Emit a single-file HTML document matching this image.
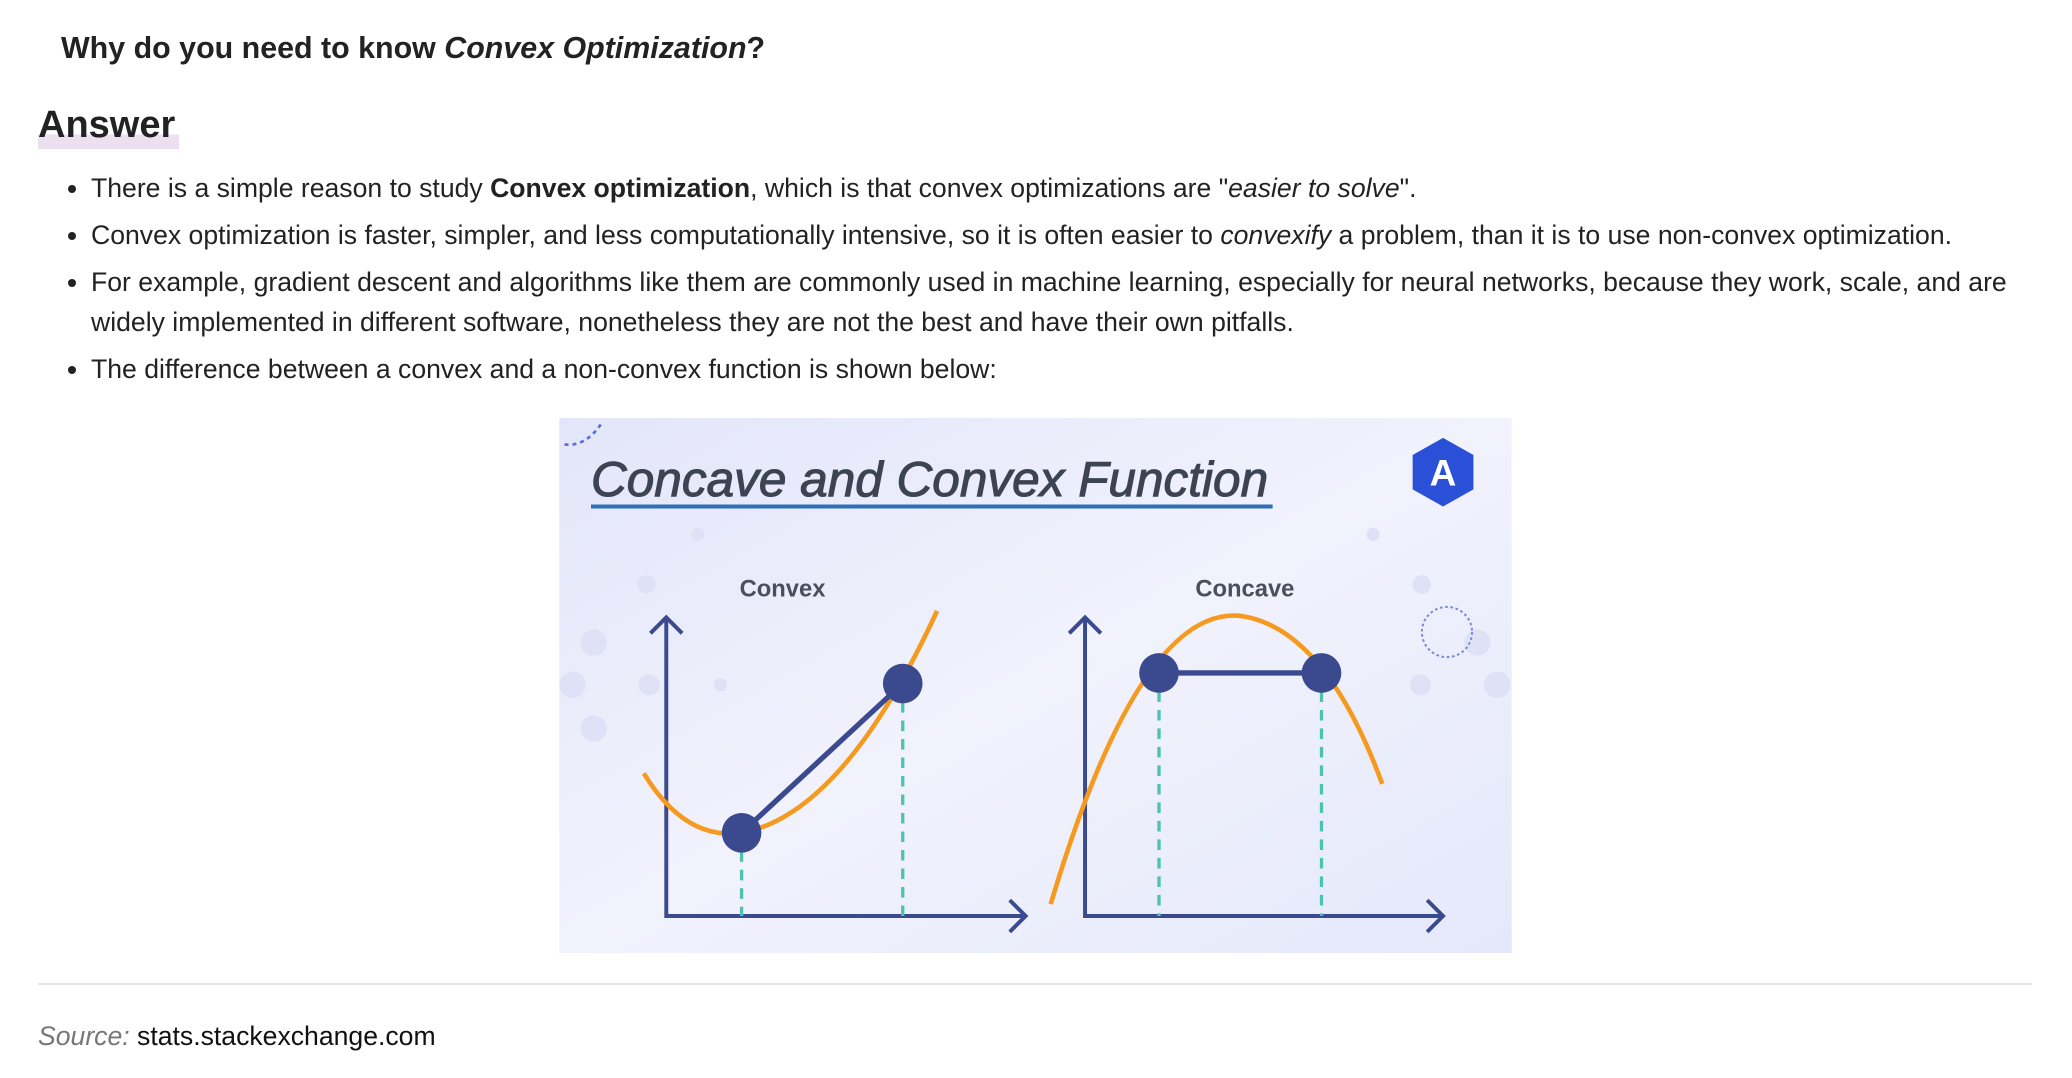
<!DOCTYPE html>
<html><head><meta charset="utf-8"><style>
body{margin:0;width:2072px;height:1078px;background:#fff;font-family:"Liberation Sans",sans-serif;color:#222;position:relative;overflow:hidden}
.t{position:absolute;left:61px;top:31px;font-size:30.4px;font-weight:bold;color:#222}
.a{position:absolute;left:38px;top:101px;font-size:38px;font-weight:bold;color:#222;line-height:48px;background:linear-gradient(transparent 70%,#ecdff0 70%);padding-right:4px}
ul{position:absolute;left:48px;top:168px;margin:0;padding-left:43px;width:1960px;font-size:26.6px;line-height:40px}
li{margin-bottom:7px}
svg{position:absolute;left:559px;top:418px}
hr{position:absolute;left:38px;top:983px;width:1994px;margin:0;border:0;border-top:2px solid #e6e6e6}
.s{position:absolute;left:38px;top:1021px;font-size:26.6px;color:#111}
.s i{color:#777}
</style></head><body>
<div class="t">Why do you need to know <i>Convex Optimization</i>?</div>
<div class="a">Answer</div>
<ul>
<li>There is a simple reason to study <b>Convex optimization</b>, which is that convex optimizations are "<i>easier to solve</i>".</li>
<li>Convex optimization is faster, simpler, and less computationally intensive, so it is often easier to <i>convexify</i> a problem, than it is to use non-convex optimization.</li>
<li>For example, gradient descent and algorithms like them are commonly used in machine learning, especially for neural networks, because they work, scale, and are widely implemented in different software, nonetheless they are not the best and have their own pitfalls.</li>
<li>The difference between a convex and a non-convex function is shown below:</li>
</ul>
<svg width="953" height="535" viewBox="0 0 721 405">
<defs><linearGradient id="g" x1="0" y1="0" x2="1" y2="1"><stop offset="0" stop-color="#e3e6fa"/><stop offset=".5" stop-color="#f1f2fc"/><stop offset="1" stop-color="#e4e8fa"/></linearGradient></defs>
<rect width="721" height="405" fill="url(#g)"/>
<path d="M4 20 Q20 22 32 4" fill="none" stroke="#5a6ee0" stroke-width="2" stroke-dasharray="3 3"/>
<g fill="#dfe2f6"><circle cx="105" cy="88" r="5"/><circle cx="66" cy="126" r="7"/><circle cx="26" cy="170" r="10"/><circle cx="68" cy="202" r="8"/><circle cx="122" cy="202" r="5"/><circle cx="10" cy="202" r="10"/><circle cx="26" cy="235" r="10"/><circle cx="616" cy="88" r="5"/><circle cx="653" cy="126" r="7"/><circle cx="695" cy="170" r="10"/><circle cx="652" cy="202" r="8"/><circle cx="710" cy="202" r="10"/></g>
<circle cx="672" cy="162" r="19" fill="none" stroke="#7a86d8" stroke-width="1.5" stroke-dasharray="2 2"/>
<text x="24" y="59" font-family="Liberation Sans" font-style="italic" font-size="37.5" fill="#3c4352" stroke="#3c4352" stroke-width="0.8">Concave and Convex Function</text>
<line x1="24" y1="67" x2="540" y2="67" stroke="#2f6fb8" stroke-width="3"/>
<polygon points="669,15 692,28 692,54 669,67 646,54 646,28" fill="#2b50d8"/>
<text x="669" y="51" font-family="Liberation Sans" font-weight="bold" font-size="28" fill="#fff" text-anchor="middle">A</text>
<text x="169" y="135" font-family="Liberation Sans" font-size="18" font-weight="bold" fill="#4a4f5c" text-anchor="middle">Convex</text>
<text x="519" y="135" font-family="Liberation Sans" font-size="18" font-weight="bold" fill="#4a4f5c" text-anchor="middle">Concave</text>
<g fill="none" stroke="#3b4a8f" stroke-width="3">
<path d="M81 151 V377 H353 M341 365 L353 377 L341 389 M69 163 L81 151 L93 163"/>
<path d="M398 151 V377 H669 M657 365 L669 377 L657 389 M386 163 L398 151 L410 163"/>
</g>
<g stroke="#4cc3b0" stroke-width="2.5" stroke-dasharray="8 6"><line x1="138" y1="314" x2="138" y2="377"/><line x1="260" y1="201" x2="260" y2="377"/><line x1="454" y1="193" x2="454" y2="377"/><line x1="577" y1="193" x2="577" y2="377"/></g>
<g fill="none" stroke="#f59a1e" stroke-width="3.5">
<path d="M64 269 Q95 320 138 314 Q215 300 286 146"/>
<path d="M372 368 Q440 140 517 150 Q580 160 623 277"/>
</g>
<g stroke="#3b4a8f" stroke-width="4"><line x1="138" y1="314" x2="260" y2="201"/><line x1="454" y1="193" x2="577" y2="193"/></g>
<g fill="#3b4a8f"><circle cx="138" cy="314" r="15"/><circle cx="260" cy="201" r="15"/><circle cx="454" cy="193" r="15"/><circle cx="577" cy="193" r="15"/></g>
</svg>
<hr>
<div class="s"><i>Source:</i> stats.stackexchange.com</div>
</body></html>
